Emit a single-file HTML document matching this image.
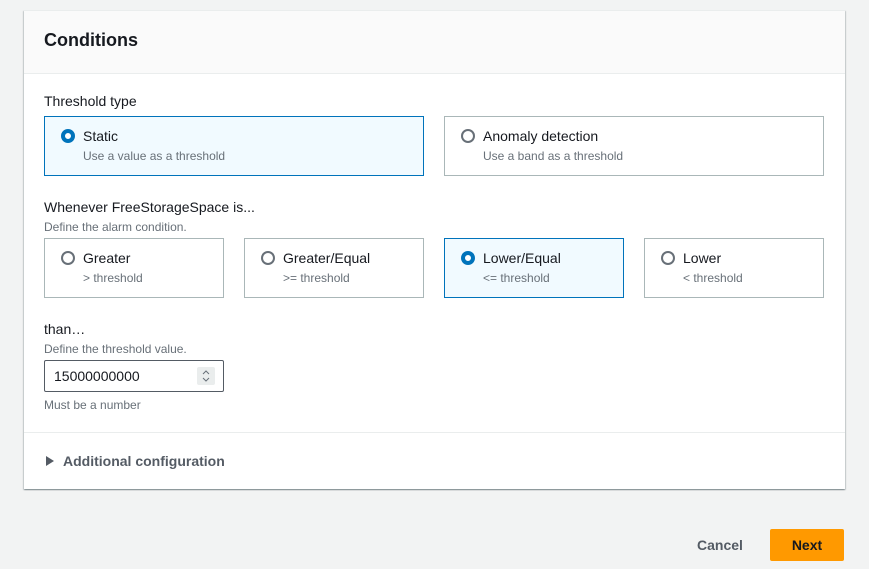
<!DOCTYPE html>
<html><head><style>
*{box-sizing:border-box;margin:0;padding:0}
body{width:869px;height:569px;background:#f2f3f3;font-family:"Liberation Sans",sans-serif;position:relative;overflow:hidden;color:#16191f}
.card{position:absolute;left:24px;top:10px;width:821px;height:479px;background:#fff;box-shadow:0 1px 1px 0 rgba(0,28,36,.3),1px 1px 1px 0 rgba(0,28,36,.15),-1px 1px 1px 0 rgba(0,28,36,.15);border-top:1px solid #eaeded}
.hdr{position:absolute;left:0;top:0;width:100%;height:63px;background:#fafafa;border-bottom:1px solid #eaeded}
.hdr h2{position:absolute;left:20px;top:19px;font-size:18px;font-weight:bold}
.a{position:absolute}
.lbl{font-size:14px}
.desc{font-size:12px;color:#687078}
.tile{position:absolute;border:1px solid #aab7b8;background:#fff;height:60px}
.tile.sel{border-color:#0073bb;background:#f1faff}
.tile .r{position:absolute;left:16px;top:12px;width:14px;height:14px;border-radius:50%;border:2px solid #687078;background:#fff}
.tile.sel .r{border:4px solid #0073bb}
.tile .t{position:absolute;left:38px;top:11px;font-size:14px}
.tile .d{position:absolute;left:38px;top:32px;font-size:12px;color:#687078}
.inp{position:absolute;left:20px;top:349px;width:180px;height:32px;border:1px solid #545b64;border-radius:2px;font-size:14px;padding:7px 9px}
.sp{position:absolute;right:8px;top:6px;width:18px;height:18px;background:#eaeded;border-radius:2px}
</style></head><body>
<div class="card">
<div class="hdr"><h2>Conditions</h2></div>
<div class="a lbl" style="left:20px;top:82px">Threshold type</div>
<div class="tile sel" style="left:20px;top:105px;width:380px"><div class="r"></div><div class="t">Static</div><div class="d">Use a value as a threshold</div></div>
<div class="tile" style="left:420px;top:105px;width:380px"><div class="r"></div><div class="t">Anomaly detection</div><div class="d">Use a band as a threshold</div></div>
<div class="a lbl" style="left:20px;top:188px">Whenever FreeStorageSpace is...</div>
<div class="a desc" style="left:20px;top:209px">Define the alarm condition.</div>
<div class="tile" style="left:20px;top:227px;width:180px"><div class="r"></div><div class="t">Greater</div><div class="d">&gt; threshold</div></div>
<div class="tile" style="left:220px;top:227px;width:180px"><div class="r"></div><div class="t">Greater/Equal</div><div class="d">&gt;= threshold</div></div>
<div class="tile sel" style="left:420px;top:227px;width:180px"><div class="r"></div><div class="t">Lower/Equal</div><div class="d">&lt;= threshold</div></div>
<div class="tile" style="left:620px;top:227px;width:180px"><div class="r"></div><div class="t">Lower</div><div class="d">&lt; threshold</div></div>
<div class="a lbl" style="left:20px;top:310px">than…</div>
<div class="a desc" style="left:20px;top:331px">Define the threshold value.</div>
<div class="inp">15000000000<div class="sp"><svg width="18" height="18" viewBox="0 0 18 18"><path d="M6 7l3-3 3 3M6 11l3 3 3-3" stroke="#687078" fill="none" stroke-width="1"/></svg></div></div>
<div class="a desc" style="left:20px;top:387px">Must be a number</div>
<div class="a" style="left:0;top:421px;width:100%;border-top:1px solid #eaeded"></div>
<div class="a" style="left:22px;top:445px;width:0;height:0;border-left:8px solid #545b64;border-top:5px solid transparent;border-bottom:5px solid transparent"></div>
<div class="a" style="left:39px;top:442px;font-size:14px;font-weight:bold;color:#545b64">Additional configuration</div>
</div>
<div class="a" style="left:697px;top:537px;font-size:14px;font-weight:bold;color:#545b64">Cancel</div>
<div class="a" style="left:770px;top:529px;width:74px;height:32px;background:#ff9900;border-radius:2px;font-size:14px;font-weight:bold;color:#16191f;text-align:center;line-height:32px">Next</div>
</body></html>
